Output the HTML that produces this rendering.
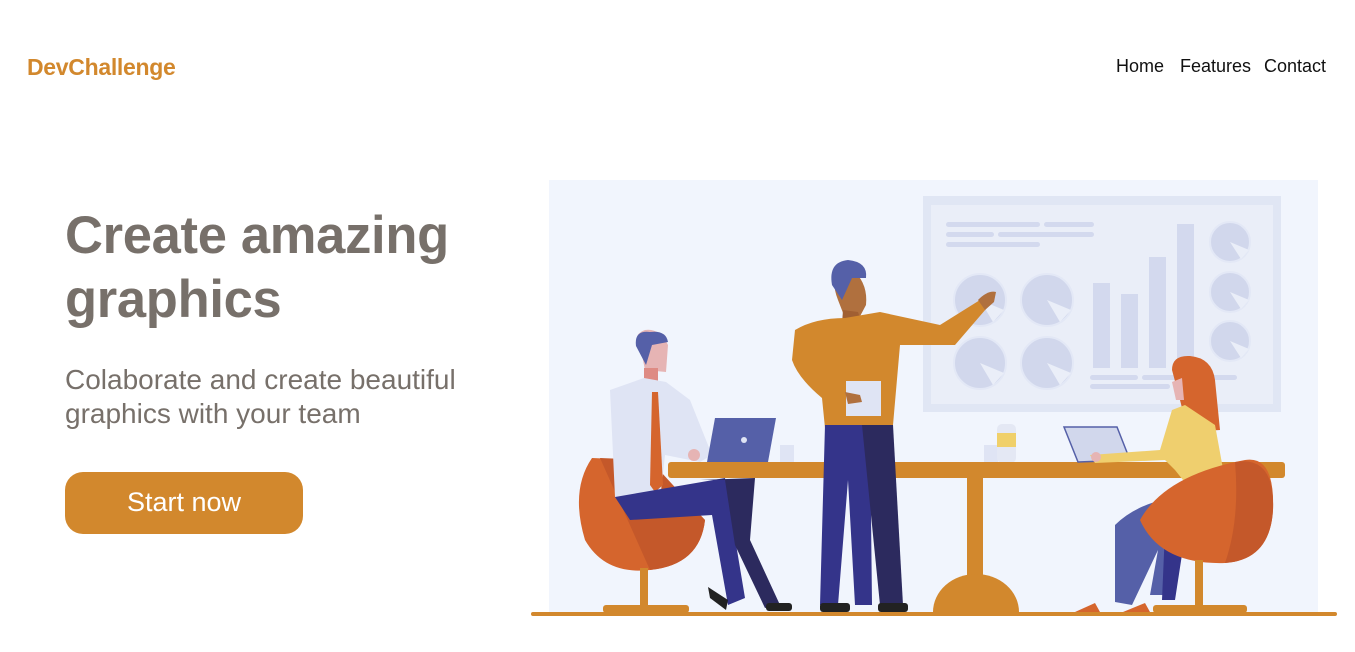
<!DOCTYPE html>
<html><head><meta charset="utf-8"><style>
*{margin:0;padding:0;box-sizing:border-box}
body{width:1355px;height:652px;overflow:hidden;background:#fff;font-family:"Liberation Sans",Arial,sans-serif;position:relative}
.logo{position:absolute;left:27px;top:54px;font-size:23px;font-weight:bold;color:#d2882d;letter-spacing:-0.3px}
.nav{position:absolute;top:56px;font-size:18px;color:#111}
h1{position:absolute;left:65px;top:204px;font-size:52.5px;line-height:64px;font-weight:bold;color:#77706a;letter-spacing:-0.3px}
.sub{position:absolute;left:65px;top:363px;font-size:28px;line-height:34px;color:#77706a}
.btn{position:absolute;left:65px;top:472px;width:238px;height:62px;border-radius:18px;background:#d2882d;color:#fff;font-size:27px;text-align:center;line-height:60px}
svg{position:absolute;left:0;top:0}
</style></head><body>
<div class="logo">DevChallenge</div>
<div class="nav" style="left:1116px">Home</div>
<div class="nav" style="left:1180px">Features</div>
<div class="nav" style="left:1264px">Contact</div>
<h1>Create amazing<br>graphics</h1>
<div class="sub">Colaborate and create beautiful<br>graphics with your team</div>
<div class="btn">Start now</div>
<svg width="1355" height="652" viewBox="0 0 1355 652">
<rect x="549" y="180" width="769" height="432" fill="#f1f5fd"/>
<rect x="923" y="196" width="358" height="216" fill="#e0e6f4"/>
<rect x="931" y="205" width="342" height="199" fill="#eaeef8"/>
<g fill="#d3d9ee">
<rect x="946" y="222" width="94" height="5" rx="2.5"/><rect x="1044" y="222" width="50" height="5" rx="2.5"/>
<rect x="946" y="232" width="48" height="5" rx="2.5"/><rect x="998" y="232" width="96" height="5" rx="2.5"/>
<rect x="946" y="242" width="94" height="5" rx="2.5"/>
<rect x="1093" y="283" width="17" height="85"/><rect x="1121" y="294" width="17" height="74"/>
<rect x="1149" y="257" width="17" height="111"/><rect x="1177" y="224" width="17" height="144"/>
<rect x="1090" y="375" width="48" height="5" rx="2.5"/><rect x="1142" y="375" width="95" height="5" rx="2.5"/>
<rect x="1090" y="384" width="80" height="5" rx="2.5"/>
</g>
<g fill="#d1d7ec" stroke="#e3e8f6" stroke-width="2">
<circle cx="980" cy="300" r="26"/><circle cx="1047" cy="300" r="26"/>
<circle cx="980" cy="363" r="26"/><circle cx="1047" cy="363" r="26"/>
<circle cx="1230" cy="242" r="20"/><circle cx="1230" cy="292" r="20"/><circle cx="1230" cy="341" r="20"/>
</g>
<g fill="#eaeef8">
<path d="M980 300 L1004 310 L993 322Z"/><path d="M1047 300 L1071 310 L1060 322Z"/>
<path d="M980 363 L1004 373 L993 385Z"/><path d="M1047 363 L1071 373 L1060 385Z"/>
<path d="M1230 242 L1249 250 L1241 259Z"/><path d="M1230 292 L1249 300 L1241 309Z"/><path d="M1230 341 L1249 349 L1241 358Z"/>
</g>
<rect x="780" y="445" width="14" height="18" fill="#dfe4f4"/><rect x="984" y="445" width="14" height="18" fill="#dfe4f4"/>
<rect x="997" y="424" width="19" height="39" rx="5" fill="#e4e8f4"/><rect x="997" y="433" width="19" height="14" fill="#f0d06a"/>
<path d="M592 458 Q570 490 585 540 Q605 575 650 570 Q700 565 705 520 L640 460 Z" fill="#d5652d"/>
<path d="M600 458 L650 570 Q700 565 705 520 L650 460Z" fill="#c4582a"/>
<rect x="640" y="568" width="8" height="40" fill="#d2882d"/><rect x="603" y="605" width="86" height="8" rx="3" fill="#d2882d"/>
<path d="M640 345 Q632 335 645 330 Q660 328 668 345 L666 372 L645 370Z" fill="#e6b4b4"/>
<path d="M636 346 Q634 330 650 332 Q666 330 668 342 L652 345 L646 365Z" fill="#5560a8"/>
<rect x="644" y="368" width="14" height="18" fill="#de8b84"/>
<path d="M610 390 L644 378 L666 382 L690 400 L712 455 L700 462 L665 455 L660 500 L615 497Z" fill="#dfe4f4"/>
<path d="M652 392 L658 392 L663 485 L655 492 L650 485Z" fill="#d5652d"/>
<path d="M615 497 L725 478 L745 598 L728 605 L712 515 L630 520Z" fill="#34348a"/>
<path d="M700 480 L755 478 L750 540 L780 605 L765 608 L735 545 L725 480Z" fill="#2c2a5e"/>
<path d="M708 587 L728 600 L726 610 L710 598Z" fill="#222"/><rect x="766" y="603" width="26" height="8" rx="3" fill="#222"/>
<path d="M715 418 L776 418 L768 462 L707 462Z" fill="#5560a8"/><circle cx="744" cy="440" r="3" fill="#dfe4f4"/>
<circle cx="694" cy="455" r="6" fill="#e6b4b4"/>
<rect x="668" y="462" width="617" height="16" rx="3" fill="#d2882d"/>
<rect x="967" y="478" width="16" height="102" fill="#d2882d"/>
<path d="M933 612 A43 38 0 0 1 1019 612Z" fill="#d2882d"/>
<path d="M838 300 Q830 280 840 270 L855 272 Q868 285 866 305 L858 320 L845 318Z" fill="#b0703e"/>
<path d="M832 285 Q828 262 848 260 Q868 262 866 278 L852 278 L842 300Z" fill="#5560a8"/>
<path d="M843 310 L858 312 L862 324 L842 324Z" fill="#a05f32"/>
<path d="M795 330 Q815 318 845 318 L880 312 L940 325 L980 300 L992 302 L955 345 L900 345 L893 425 L825 428 L822 398 Q798 378 792 360Z" fill="#d2882d"/>
<path d="M978 300 Q988 290 996 292 L994 302 L985 310Z" fill="#b0703e"/>
<rect x="846" y="381" width="35" height="35" fill="#dfe4f4"/>
<path d="M845 392 L860 395 L862 402 L848 404Z" fill="#b0703e"/>
<path d="M825 425 L870 425 L872 605 L855 605 L848 480 L838 605 L820 605Z" fill="#34348a"/>
<path d="M862 425 L893 425 L903 605 L880 605Z" fill="#2c2a5e"/>
<rect x="820" y="603" width="30" height="9" rx="3" fill="#222"/><rect x="878" y="603" width="30" height="9" rx="3" fill="#222"/>
<path d="M1172 370 Q1172 355 1190 356 Q1212 358 1215 380 L1220 430 L1188 432 L1180 400Z" fill="#d5652d"/>
<path d="M1172 382 L1182 378 L1184 400 L1176 400Z" fill="#e6b4b4"/>
<path d="M1064 427 L1117 427 L1130 460 L1078 462Z" fill="#d1d7ec" stroke="#5560a8" stroke-width="1.5"/>
<path d="M1090 455 L1160 450 L1172 410 L1185 405 L1215 425 L1225 480 L1195 495 L1175 470 L1165 460 L1095 463Z" fill="#efcf6e"/>
<circle cx="1096" cy="457" r="5" fill="#e6b4b4"/>
<path d="M1115 525 Q1140 500 1190 495 L1185 535 L1165 595 L1150 595 L1158 550 L1132 605 L1115 602Z" fill="#5560a8"/>
<path d="M1165 530 L1185 535 L1175 600 L1162 600Z" fill="#34348a"/>
<path d="M1075 612 L1095 603 L1100 612Z M1123 612 L1145 603 L1150 612Z" fill="#d5652d"/>
<path d="M1140 520 Q1165 475 1245 460 Q1275 455 1273 510 Q1270 560 1225 563 Q1160 565 1140 520Z" fill="#d5652d"/>
<path d="M1235 462 Q1275 455 1273 510 Q1270 560 1225 563 Q1240 520 1235 462Z" fill="#c4582a"/>
<rect x="1195" y="560" width="8" height="48" fill="#d2882d"/><rect x="1153" y="605" width="94" height="8" rx="3" fill="#d2882d"/>
<rect x="531" y="612" width="806" height="4" rx="2" fill="#d2882d"/>
</svg>
</body></html>
